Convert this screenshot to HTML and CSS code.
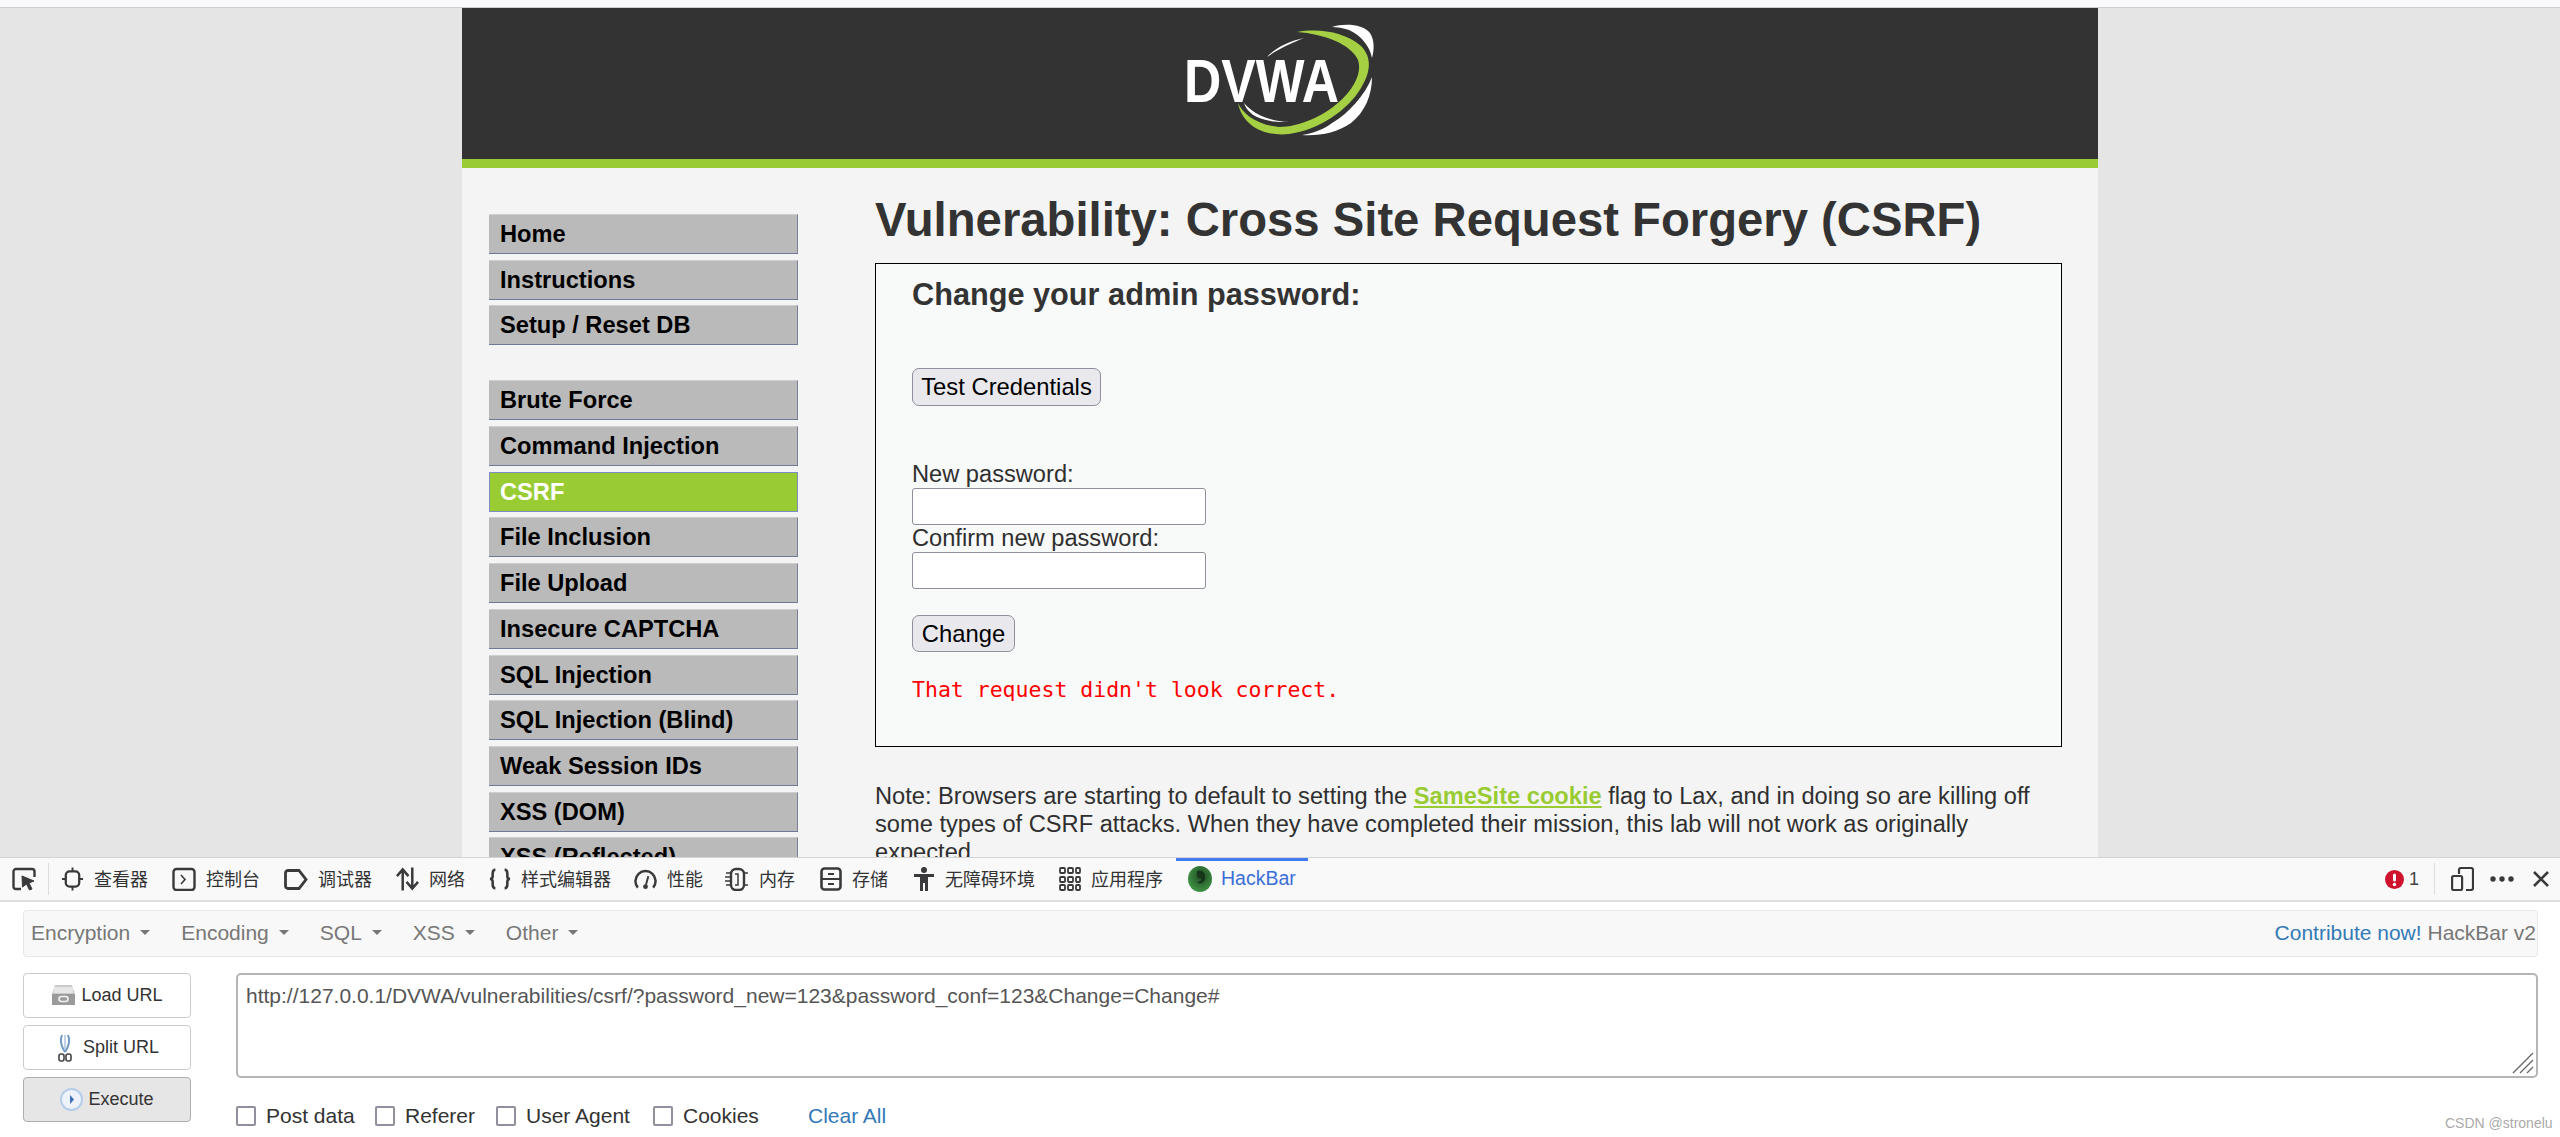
FILE: index.html
```html
<!DOCTYPE html>
<html lang="en">
<head>
  <meta charset="UTF-8">
  <title>Vulnerability: Cross Site Request Forgery (CSRF)</title>
  <link rel="stylesheet" href="styles.css">
</head>
<body>
  <div class="top-strip"></div>
  <div class="viewport">
    <div class="container">
      <div class="header">
        <svg class="logo" width="260" height="140" viewBox="0 0 260 140">
          <path fill="#fff" d="M203 17 C215 13 234 14 241 23 C246 31 245 41 243 48 C241 37 233 26 220 20 C214 18 208 17 203 17Z"/>
          <path fill="#fff" d="M243 67 C243 85 236 102 222 113 C208 123 190 126 173 125 C185 123 195 119 203 113 C220 103 236 85 243 67Z"/>
          <path fill="#a5d044" d="M168 22 C190 18 216 22 232 36 C243 47 242 62 232 78 C219 100 190 120 160 124 C135 127 113 115 109 93 C114 104 128 115 150 117 C170 117 195 106 210 92 C226 78 233 62 229 50 C222 34 195 24 168 22Z"/>
          <path fill="#fff" d="M175 28 C160 31 146 38 138 47 C148 40 162 33 175 28Z"/>
          <path fill="#fff" d="M115 93 C118 104 132 113 160 112 C140 111 124 104 115 93Z"/>
          <text class="logo-text" x="55" y="92" textLength="155" lengthAdjust="spacingAndGlyphs">DVWA</text>
        </svg>
      </div>
      <div class="content">
        <div class="sidebar">
          <ul class="menu">
            <li><a>Home</a></li>
            <li><a>Instructions</a></li>
            <li><a>Setup / Reset DB</a></li>
          </ul>
          <ul class="menu">
            <li><a>Brute Force</a></li>
            <li><a>Command Injection</a></li>
            <li class="selected"><a>CSRF</a></li>
            <li><a>File Inclusion</a></li>
            <li><a>File Upload</a></li>
            <li><a>Insecure CAPTCHA</a></li>
            <li><a>SQL Injection</a></li>
            <li><a>SQL Injection (Blind)</a></li>
            <li><a>Weak Session IDs</a></li>
            <li><a>XSS (DOM)</a></li>
            <li><a>XSS (Reflected)</a></li>
          </ul>
        </div>
        <div class="main">
          <h1>Vulnerability: Cross Site Request Forgery (CSRF)</h1>
          <div class="vulnerable-code">
            <h3>Change your admin password:</h3>
            <button class="btn btn-test">Test Credentials</button>
            <div class="field-label label-first">New password:</div>
            <input class="field" type="password">
            <div class="field-label">Confirm new password:</div>
            <input class="field" type="password">
            <button class="btn btn-change">Change</button>
            <pre class="error">That request didn't look correct.</pre>
          </div>
          <p class="note">Note: Browsers are starting to default to setting the <a>SameSite cookie</a> flag to Lax, and in doing so are killing off some types of CSRF attacks. When they have completed their mission, this lab will not work as originally expected.</p>
        </div>
      </div>
    </div>
  </div>

  <div class="devtools">
    <div class="toolbar">
      <div class="picker">
        <svg width="24" height="24" viewBox="0 0 24 24" fill="none" stroke="#3a3a3c" stroke-width="2.4"><path d="M9 22H4a2.500 2.500 0 0 1-2.500-2.500V4.500A2.500 2.500 0 0 1 4 2h16a2.500 2.500 0 0 1 2.500 2.500V10"/><path d="M10 9l12 5-5 2 3 6-2.500 1-3-6-4 3z" fill="#3a3a3c" stroke-width="1"/></svg>
      </div>
      <div class="tab"><svg width="23" height="24" viewBox="0 0 24 24" fill="none" stroke="#3a3a3c" stroke-width="2.400"><rect x="5" y="4" width="14" height="16" rx="4"/><path d="M12 0v4M12 20v4M1 12h4M19 12h4" stroke-width="2"/></svg><span>查看器</span></div>
      <div class="tab"><svg width="24" height="24" viewBox="0 0 24 24" fill="none" stroke="#3a3a3c" stroke-width="2.400"><rect x="1.500" y="2" width="21" height="21" rx="3"/><path d="M9 8l4 4.500-4 4.500" stroke-width="1.600"/></svg><span>控制台</span></div>
      <div class="tab"><svg width="24" height="24" viewBox="0 0 24 24" fill="none" stroke="#3a3a3c" stroke-width="2.800"><path d="M4 3.500h11l7 9-7 9H4a2.500 2.500 0 0 1-2.500-2.500V6A2.500 2.500 0 0 1 4 3.500z"/></svg><span>调试器</span></div>
      <div class="tab"><svg width="23" height="24" viewBox="0 0 24 24" fill="none" stroke="#3a3a3c" stroke-width="2.600"><path d="M7 24V2M1 9l6-7 6 7"/><path d="M17 0v22M11 15l6 7 6-7"/></svg><span>网络</span></div>
      <div class="tab tab-style"><svg width="22" height="24" viewBox="0 0 24 24" fill="none" stroke="#3a3a3c" stroke-width="2.800"><path d="M7 2C4 2 4 4 4 6v3c0 2-1 3-3 3 2 0 3 1 3 3v3c0 2 0 4 3 4"/><path d="M17 2c3 0 3 2 3 4v3c0 2 1 3 3 3-2 0-3 1-3 3v3c0 2 0 4-3 4"/></svg><span>样式编辑器</span></div>
      <div class="tab tab-perf"><svg width="23" height="24" viewBox="0 0 24 24" fill="none" stroke="#3a3a3c" stroke-width="2.600"><path d="M4 21a10.500 10.500 0 1 1 16 0"/><path d="M15 9l-2.500 9" stroke-width="2"/><circle cx="12" cy="20" r="2.500" fill="#3a3a3c" stroke="none"/></svg><span>性能</span></div>
      <div class="tab tab-mem"><svg width="24" height="24" viewBox="0 0 24 24" fill="none" stroke="#3a3a3c" stroke-width="2.400"><rect x="6" y="2" width="13" height="21" rx="5"/><path d="M1 6h5M0 10h6M0 14h6M1 18h5M19 6h4M19 18h4" stroke-width="1.500"/><path d="M10 7h3v11h-3" stroke-width="1.500"/></svg><span>内存</span></div>
      <div class="tab tab-store"><svg width="22" height="24" viewBox="0 0 22 24" fill="none" stroke="#3a3a3c" stroke-width="2.600"><rect x="1.500" y="1.500" width="19" height="21" rx="3"/><path d="M2 12h18M8 7h6M8 17h6" stroke-width="2"/></svg><span>存储</span></div>
      <div class="tab"><svg width="22" height="24" viewBox="0 0 22 24"><circle cx="11" cy="3" r="3" fill="#3a3a3c"/><path fill="#3a3a3c" d="M1 7h20v3h-6v14h-3v-8h-2v8H7V10H1z"/></svg><span>无障碍环境</span></div>
      <div class="tab tab-apps"><svg width="22" height="24" viewBox="0 0 22 24" fill="none" stroke="#3a3a3c" stroke-width="1.800"><rect x="1" y="1" width="5" height="5" rx="1"/><rect x="9" y="1" width="5" height="5" rx="1"/><rect x="17" y="1" width="4" height="5" rx="1"/><rect x="1" y="10" width="5" height="5" rx="1"/><rect x="9" y="10" width="5" height="5" rx="1"/><rect x="17" y="10" width="4" height="5" rx="1"/><rect x="1" y="18" width="5" height="5" rx="1"/><rect x="9" y="18" width="5" height="5" rx="1"/><rect x="17" y="18" width="4" height="5" rx="1"/></svg><span>应用程序</span></div>
      <div class="tab tab-active"><svg width="24" height="26" viewBox="0 0 24 26"><defs><radialGradient id="hb" cx="55%" cy="40%" r="60%"><stop offset="0" stop-color="#1f4d22"/><stop offset="0.5" stop-color="#2f6e33"/><stop offset="1" stop-color="#3f9445"/></radialGradient></defs><ellipse cx="12" cy="13" rx="12" ry="13" fill="url(#hb)"/><path d="M9 5c5-2 9 2 8 8-1 4-5 6-8 3 3 0 5-2 4-4-2 1-5 0-4-7z" fill="#16351a"/></svg><span>HackBar</span></div>
      <div class="toolbar-right">
        <div class="err-count">
          <svg width="19" height="19" viewBox="0 0 19 19"><circle cx="9.500" cy="9.500" r="9.500" fill="#d0132c"/><rect x="8" y="3.500" width="3" height="8" rx="1.500" fill="#fff"/><circle cx="9.500" cy="14.500" r="1.700" fill="#fff"/></svg>
          <span>1</span>
        </div>
        <div class="sep"></div>
        <svg class="ic-phone" width="23" height="24" viewBox="0 0 23 24" fill="none" stroke="#3a3a3c" stroke-width="2.200"><path d="M8 7V3a2 2 0 0 1 2-2h10a2 2 0 0 1 2 2v18a2 2 0 0 1-2 2h-5"/><rect x="1.100" y="9" width="10" height="14" rx="1.500"/></svg>
        <svg class="ic-dots" width="24" height="6" viewBox="0 0 24 6" fill="#3a3a3c"><circle cx="3" cy="3" r="2.700"/><circle cx="12" cy="3" r="2.700"/><circle cx="21" cy="3" r="2.700"/></svg>
        <svg class="ic-close" width="16" height="16" viewBox="0 0 16 16" stroke="#3a3a3c" stroke-width="2.600"><path d="M1 1l14 14M15 1L1 15"/></svg>
      </div>
    </div>

    <div class="hackbar">
      <div class="hb-nav">
        <div class="hb-menu">
          <a>Encryption<i class="caret"></i></a>
          <a>Encoding<i class="caret"></i></a>
          <a>SQL<i class="caret"></i></a>
          <a>XSS<i class="caret"></i></a>
          <a>Other<i class="caret"></i></a>
        </div>
        <div class="hb-brand"><a>Contribute now!</a> HackBar v2</div>
      </div>
      <div class="hb-body">
        <div class="hb-actions">
          <div class="hb-btn">
            <svg width="25" height="21" viewBox="0 0 25 21"><path fill="#c9c9c9" d="M4 0h17l3 9v11H1V9z"/><rect x="1" y="9" width="23" height="11" fill="#9a9a9a"/><rect x="3" y="2" width="19" height="6" fill="#e6e6e6"/><path d="M8 14a2.500 2.500 0 0 1 2.500-2.500h4a2.500 2.500 0 0 1 0 5h-4A2.500 2.500 0 0 1 8 14z" fill="none" stroke="#f2f2f2" stroke-width="1.600"/></svg>
            <span>Load URL</span>
          </div>
          <div class="hb-btn hb-btn-split">
            <svg width="14" height="28" viewBox="0 0 14 28" fill="none"><path d="M4 1c-2 5-1 11 3 17M10 1c2 5 1 11-3 17" stroke="#6f9ac4" stroke-width="2"/><path d="M7 1v15" stroke="#a9c4de" stroke-width="1.500"/><rect x="1" y="20" width="5" height="7" rx="2" stroke="#444" stroke-width="1.600"/><rect x="8" y="20" width="5" height="7" rx="2" stroke="#444" stroke-width="1.600"/></svg>
            <span>Split URL</span>
          </div>
          <div class="hb-btn hb-btn-active">
            <svg width="23" height="23" viewBox="0 0 23 23"><circle cx="11.500" cy="11.500" r="10.500" fill="#eef3fb" stroke="#b5cdea" stroke-width="2"/><path d="M10 7l4 4.500-4 4.500z" fill="#3d6fb0"/></svg>
            <span>Execute</span>
          </div>
        </div>
        <div class="hb-form">
          <div class="url-box">http://127.0.0.1/DVWA/vulnerabilities/csrf/?password_new=123&amp;password_conf=123&amp;Change=Change#
            <svg class="grip" width="22" height="22" viewBox="0 0 22 22" stroke="#666" stroke-width="1.300"><path d="M1 21L21 1M8 21L21 8M15 21l6-6"/></svg>
          </div>
          <div class="hb-checks">
            <label class="chk chk-post"><i></i>Post data</label>
            <label class="chk chk-ref"><i></i>Referer</label>
            <label class="chk chk-ua"><i></i>User Agent</label>
            <label class="chk chk-cookie"><i></i>Cookies</label>
            <a class="clear-all">Clear All</a>
          </div>
        </div>
      </div>
    </div>
    <div class="watermark">CSDN @stronelu</div>
  </div>
</body>
</html>
```

FILE: styles.css
```css
* { box-sizing: border-box; }
html, body { margin: 0; height: 100%; overflow: hidden; }
body { display: flex; flex-direction: column; font-family: "Liberation Sans", Arial, sans-serif; background: #e5e5e5; color: #2f2f2f; }

.top-strip { height: 8px; flex: none; background: #f9f9fb; border-bottom: 1px solid #cfcfcf; }
.viewport { flex: 1; min-height: 0; overflow: hidden; }
.container { width: 1636px; margin: 0 auto; background: #f4f4f4; min-height: 100%; }

.header { display: flex; justify-content: center; height: 160px; background: #333; border-bottom: 9px solid #9c3; }
.logo { margin: 2px 0 0 -42px; }
.logo-text { font-family: "Liberation Sans", Arial, sans-serif; font-weight: bold; font-size: 61px; fill: #fff; }

.content { display: flex; padding: 0 36px 0 27px; }
.sidebar { width: 309px; flex: none; padding-top: 46px; }
.menu { list-style: none; margin: 0 0 35px; padding: 0; }
.menu li { height: 40px; margin-bottom: 5.700px; background: #bababa; border-top: 1px solid #cfcfcf; border-bottom: 1px solid #6f7a98; border-right: 1px solid #7a8296; }
.menu a { display: block; padding-left: 11px; font-size: 23.650px; font-weight: bold; line-height: 38px; color: #000; }
.menu .selected { background: #9c3; border: 1px solid #7c8cc4; }
.menu .selected a { padding-left: 10px; color: #fff; }

.main { margin-left: 77px; flex: 1; min-width: 0; }
h1 { margin: 16px 0 0; font-size: 47.250px; line-height: 72px; font-weight: bold; color: #333; white-space: nowrap; }
.vulnerable-code { height: 484px; margin-top: 7px; padding: 0 36px; background: #f8f9f9; border: 1px solid #000; }
h3 { margin: 0; padding-top: 13px; font-size: 30.700px; line-height: 36px; font-weight: bold; color: #333; }
.btn { display: block; height: 38px; padding: 0; font-family: inherit; font-size: 23.800px; color: #000; background: #e9e9ed; border: 1px solid #8f8f9d; border-radius: 7px; }
.btn-test { width: 189px; margin-top: 55px; }
.field-label { font-size: 23.650px; line-height: 27px; color: #2f2f2f; }
.label-first { margin-top: 55px; }
.field { display: block; width: 294px; height: 37px; background: #fff; border: 1px solid #8f8f9d; border-radius: 3px; }
.btn-change { width: 103px; height: 37px; margin-top: 26px; }
.error { margin: 24px 0 0; font-family: "DejaVu Sans Mono", monospace; font-size: 21.500px; line-height: 28px; color: #f00; }
.note { margin: 35px 0 0; font-size: 23.650px; line-height: 28px; color: #2f2f2f; }
.note a { font-weight: bold; color: #9c3; text-decoration: underline; }

.devtools { position: relative; height: 280px; flex: none; background: #fff; border-top: 1px solid #d4d4d4; }
.toolbar { display: flex; align-items: center; height: 44px; padding-left: 12px; background: #f9f9fa; border-bottom: 2px solid #dedee0; }
.picker { display: flex; align-items: center; height: 32px; padding-right: 12px; border-right: 1px solid #dcdcdc; }
.tab { display: flex; align-items: center; gap: 10px; height: 42px; padding: 0 12px; font-family: "Noto Sans CJK SC", sans-serif; font-size: 18px; color: #333; white-space: nowrap; }
.tab span { margin-top: -2px; }
.tab-style { padding-right: 11px; }
.tab-perf { padding-right: 10px; }
.tab-mem { padding-right: 13px; }
.tab-store { padding-right: 13px; }
.tab-apps { padding-right: 13px; }
.tab-active { position: relative; font-family: "Liberation Sans", sans-serif; font-size: 19.500px; color: #3b6fd8; gap: 9px; }
.tab-active::before { content: ""; position: absolute; left: 0; right: 0; top: 0; height: 3px; background: #3f7bf3; }
.toolbar-right { display: flex; align-items: center; margin-left: auto; padding-right: 11px; }
.err-count { display: flex; align-items: center; gap: 5px; font-size: 18px; color: #444; }
.sep { width: 1px; height: 32px; margin: 0 16px 0 15px; background: #dcdcdc; }
.ic-dots { margin: 0 19px 0 16px; }

.hackbar { padding: 8px 22px 0 23px; }
.hb-nav { display: flex; justify-content: space-between; align-items: center; height: 47px; padding: 0 1px 2px 7px; background: #f8f8f8; border: 1px solid #e7e7e7; border-radius: 4px; font-size: 21px; }
.hb-menu { display: flex; }
.hb-menu a { display: flex; align-items: center; color: #777; margin-right: 31px; }
.caret { width: 0; height: 0; margin-left: 10px; border-top: 5px solid #777; border-left: 5px solid transparent; border-right: 5px solid transparent; }
.hb-brand { color: #777; }
.hb-brand a { color: #337ab7; }
.hb-body { display: flex; margin-top: 16px; }
.hb-actions { display: flex; flex-direction: column; gap: 7px; width: 168px; flex: none; }
.hb-btn { display: flex; align-items: center; justify-content: center; gap: 5px; height: 45px; background: #fff; border: 1px solid #ccc; border-radius: 4px; font-size: 18px; color: #333; }
.hb-btn-split { gap: 11px; padding-left: 3px; }
.hb-btn-active { background: #e6e6e6; border-color: #adadad; }
.hb-form { margin-left: 45px; flex: 1; min-width: 0; }
.url-box { position: relative; height: 105px; padding: 9px 8px; background: #fff; border: 2px solid #b5b5b5; border-radius: 5px; font-size: 21px; line-height: 24px; color: #555; }
.grip { position: absolute; right: 2px; bottom: 2px; }
.hb-checks { display: flex; align-items: center; margin-top: 26px; font-size: 21px; color: #333; }
.chk { display: flex; align-items: center; }
.chk i { width: 20px; height: 20px; margin-right: 10px; background: #fff; border: 2.500px solid #8f8f9d; border-radius: 2px; }
.chk-post { width: 139px; }
.chk-ref { width: 121px; }
.chk-ua { width: 157px; }
.chk-cookie { width: 155px; }
.clear-all { color: #337ab7; }
.watermark { position: absolute; left: 2445px; top: 257px; font-size: 14px; color: #aaa; white-space: nowrap; }
```
